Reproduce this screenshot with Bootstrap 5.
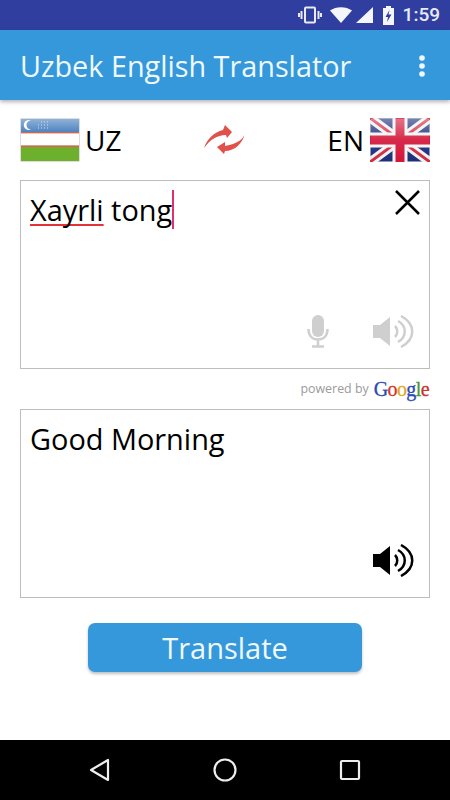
<!DOCTYPE html>
<html lang="en">
<head>
    <meta charset="UTF-8">
    <meta name="viewport" content="width=device-width, initial-scale=1.0">
    <title>Uzbek English Translator</title>
    <link href="https://cdn.jsdelivr.net/npm/bootstrap@5.3.3/dist/css/bootstrap.min.css" rel="stylesheet">
    <style>
        body {
            width: 450px;
            height: 800px;
            overflow: hidden;
            background-color: #fff;
            font-family: "Open Sans", sans-serif;
            color: #000;
        }
        .status-strip {
            height: 30px;
            background-color: #303f9f;
            color: #e8eaf6;
            font-family: Roboto, sans-serif;
            font-size: 19px;
            font-weight: 500;
            padding-right: 10px;
        }
        .app-bar {
            height: 70px;
            background-color: #3498db;
            padding: 2px 25px 0 20px;
            box-shadow: 0 2px 4px rgba(0, 0, 0, .3);
            position: relative;
        }
        .app-title {
            font-size: 28.800px;
            color: #f0f8fd;
            line-height: 1;
        }
        .lang-row {
            height: 80px;
            padding: 0 20px;
            font-size: 28px;
        }
        .lang-gap {
            gap: 5px;
        }
        .lang-gap-end {
            gap: 6px;
        }
        .lang-label {
            position: relative;
            top: 0;
        }
        .text-panel {
            height: 189px;
            margin: 0 20px;
            border: 1.500px solid #bdbdbd;
            padding: 7px 9px;
            font-size: 28.900px;
            position: relative;
        }
        .squiggle {
            text-decoration: underline #e53238 2px;
            text-underline-offset: 3px;
            text-decoration-skip-ink: none;
        }
        .caret-bar {
            display: inline-block;
            width: 2px;
            height: 39px;
            background-color: #e0316f;
            vertical-align: -8px;
        }
        .panel-icon {
            position: absolute;
        }
        .powered {
            height: 40px;
            margin: 0 21px;
            color: #9a9a9a;
            font-size: 12.400px;
        }
        .google-word {
            font-family: "Liberation Serif", serif;
            font-size: 20px;
            letter-spacing: -.6px;
            margin-left: 5px;
            -webkit-text-stroke: .3px;
        }
        .translate-btn {
            width: 274px;
            height: 49px;
            background-color: #3498db;
            border: 0;
            border-radius: 7px;
            color: #f0f8fd;
            font-size: 29px;
            line-height: 1;
            box-shadow: 0 2px 3px rgba(0, 0, 0, .25);
        }
        .btn-wrap {
            margin-top: 25px;
        }
        .nav-strip {
            height: 60px;
            background-color: #000;
            margin-top: auto;
            padding: 0 89px 0 89px;
        }
    </style>
</head>
<body class="d-flex flex-column">

    <div class="status-strip d-flex align-items-center justify-content-end">
        <svg width="24" height="18" viewBox="0 0 24 18" class="me-2" fill="none" stroke="#e8eaf6">
            <rect x="7" y="1.500" width="10" height="15" rx="1" stroke-width="2"/>
            <path d="M3.500 5v8M1 7v4M20.500 5v8M23 7v4" stroke-width="2"/>
        </svg>
        <svg width="22" height="16" viewBox="0 0 22 16" fill="#f5f6fb">
            <path d="M0 3.500C6 -1 16 -1 22 3.500L11 16z"/>
        </svg>
        <svg width="18" height="16" viewBox="0 0 18 16" fill="#f5f6fb" class="me-2 ms-1">
            <path d="M0 16L17 0v16z"/>
        </svg>
        <svg width="13" height="19" viewBox="0 0 13 19" class="me-2">
            <path d="M4 0h5v2h3v17H1V2h3z" fill="#f5f6fb"/>
            <path d="M7.500 4L3.500 11h2.500l-1 5 4.500-7.500H6.500z" fill="#303f9f"/>
        </svg>
        <span>1:59</span>
    </div>

    <nav class="navbar app-bar flex-nowrap">
        <span class="app-title">Uzbek English Translator</span>
        <svg width="6" height="22" viewBox="0 0 6 22" fill="#f0f8fd">
            <circle cx="3" cy="3" r="2.800"/><circle cx="3" cy="11" r="2.800"/><circle cx="3" cy="19" r="2.800"/>
        </svg>
    </nav>

    <div class="lang-row d-flex align-items-center justify-content-between">
        <div class="d-flex align-items-center lang-gap">
            <svg width="60" height="44" viewBox="0 0 60 44">
                <defs>
                    <linearGradient id="uzBlue" x1="0" y1="0" x2="0" y2="1">
                        <stop offset="0" stop-color="#8fb2d9"/>
                        <stop offset="1" stop-color="#4f84c0"/>
                    </linearGradient>
                    <linearGradient id="gloss" x1="0" y1="0" x2="0" y2="1">
                        <stop offset="0" stop-color="#fff" stop-opacity=".4"/>
                        <stop offset=".5" stop-color="#fff" stop-opacity=".08"/>
                        <stop offset="1" stop-color="#fff" stop-opacity="0"/>
                    </linearGradient>
                </defs>
                <rect x=".5" y=".5" width="59" height="43" fill="#bbb"/>
                <rect x="1" y="1" width="58" height="13" fill="url(#uzBlue)"/>
                <rect x="1" y="14" width="58" height="1.500" fill="#d9634f"/>
                <rect x="1" y="15.500" width="58" height="12" fill="#fff"/>
                <rect x="1" y="27.500" width="58" height="1.500" fill="#d9634f"/>
                <rect x="1" y="29" width="58" height="14" fill="#6cb02c"/>
                <path d="M11 2.500a5 5 0 1 0 0 9 4 4 0 1 1 0-9z" fill="#fff"/>
                <path d="M18 10h11M18 7h11M21 4h8" stroke="#cfe0f2" stroke-width="1" stroke-dasharray="1 2"/>
            </svg>
            <span class="lang-label">UZ</span>
        </div>
        <svg width="41" height="30" viewBox="0 0 41 30" fill="#e2504c">
            <path d="M0 23C3 14 10 7 19 5L21 0l7 7-5 6-1-3C13 10 6 15 0 23z"/>
            <path d="M41 8C40 14 33 19 21 21L21 17 13 22l7 7 1-3C31 26 39 18 41 8z"/>
        </svg>
        <div class="d-flex align-items-center lang-gap-end">
            <span class="lang-label">EN</span>
            <svg width="60" height="44" viewBox="0 0 60 44">
                <rect x=".5" y=".5" width="59" height="43" fill="#1c2f7c"/>
                <path d="M0 0L60 44M60 0L0 44" stroke="#f2f2f2" stroke-width="9"/>
                <path d="M0 0L60 44M60 0L0 44" stroke="#d22b40" stroke-width="3"/>
                <path d="M30 0V44M0 22H60" stroke="#f4f4f4" stroke-width="15"/>
                <path d="M30 0V44M0 22H60" stroke="#d4173a" stroke-width="9"/>
                <rect x=".5" y=".5" width="59" height="43" fill="url(#gloss)"/>
            </svg>
        </div>
    </div>

    <div class="text-panel">
        <span class="squiggle">Xayrli</span> tong<span class="caret-bar"></span>
        <svg class="panel-icon" style="right:9px;top:9px" width="25" height="25" viewBox="0 0 25 25" stroke="#000" stroke-width="2.500">
            <path d="M1 1L24 24M24 1L1 24"/>
        </svg>
        <svg class="panel-icon" style="right:100px;top:134px" width="22" height="33" viewBox="0 0 22 33" fill="none" stroke="#cfcfcf" stroke-width="2.500">
            <rect x="5" y="0" width="12" height="22" rx="6" fill="#cfcfcf" stroke="none"/>
            <path d="M1.500 14c0 7 4 10.500 9.500 10.500S20.500 21 20.500 14M11 24.500V31M5 31.500h12"/>
        </svg>
        <svg class="panel-icon" style="right:15px;top:134px" width="41" height="33" viewBox="0 0 41 33" fill="none" stroke="#cfcfcf" stroke-width="2.500">
            <path d="M0 10h7L17 2v29L7 23H0z" fill="#cfcfcf" stroke="none"/>
            <path d="M22 11c3 3 3 8 0 11M25 6c9 5 9 16 0 21M28 1c15 8 15 23 0 31"/>
        </svg>
    </div>

    <div class="powered d-flex align-items-center justify-content-end">
        <span>powered by</span>
        <span class="google-word"><span style="color:#2a4bb5">G</span><span style="color:#d3342a">o</span><span style="color:#e0a81e">o</span><span style="color:#2a4bb5">g</span><span style="color:#3f9a3a">l</span><span style="color:#c8352c">e</span></span>
    </div>

    <div class="text-panel">
        Good Morning
        <svg class="panel-icon" style="right:15px;top:134px" width="41" height="33" viewBox="0 0 41 33" fill="none" stroke="#000" stroke-width="2.500">
            <path d="M0 10h7L17 2v29L7 23H0z" fill="#000" stroke="none"/>
            <path d="M22 11c3 3 3 8 0 11M25 6c9 5 9 16 0 21M28 1c15 8 15 23 0 31"/>
        </svg>
    </div>

    <div class="btn-wrap d-flex justify-content-center">
        <button class="btn translate-btn p-0" type="button">Translate</button>
    </div>

    <div class="nav-strip d-flex align-items-center justify-content-between">
        <svg width="22" height="24" viewBox="0 0 22 24" fill="none" stroke="#eee" stroke-width="2.200" stroke-linejoin="round">
            <path d="M19 2V22L2 12z"/>
        </svg>
        <svg width="24" height="24" viewBox="0 0 24 24" fill="none" stroke="#eee" stroke-width="2.200">
            <circle cx="12" cy="12" r="10.500"/>
        </svg>
        <svg width="22" height="22" viewBox="0 0 22 22" fill="none" stroke="#eee" stroke-width="2.200" stroke-linejoin="round">
            <rect x="2" y="2" width="18" height="18" rx="1"/>
        </svg>
    </div>

    <script src="https://cdn.jsdelivr.net/npm/bootstrap@5.3.3/dist/js/bootstrap.bundle.min.js"></script>
</body>
</html>
